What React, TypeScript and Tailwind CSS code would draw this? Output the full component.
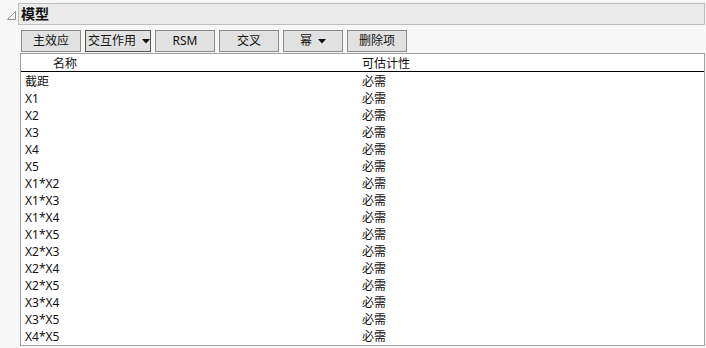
import { useState } from "react";

const terms = [
    "截距", "X1", "X2", "X3", "X4", "X5",
    "X1*X2", "X1*X3", "X1*X4", "X1*X5",
    "X2*X3", "X2*X4", "X2*X5", "X3*X4", "X3*X5", "X4*X5",
];

const font = { fontFamily: '"Segoe UI", "Noto Sans", "Noto Sans CJK SC", sans-serif' };

function Caret() {
    return (
        <svg width="8" height="5" viewBox="0 0 8 5" className="ml-1.5">
            <path d="M0 0 L8 0 L4 4.5 Z" fill="#111" />
        </svg>
    );
}

function ToolButton({ label, width, menu, active }: any) {
    return (
        <button
            className={`h-[22px] ${width} flex items-center ${menu && active ? "justify-start pl-[2px]" : "justify-center"} border ${active ? "border-[#555]" : "border-[#8a8a8a]"} bg-[#e1e1e1] text-[12px] text-[#111] leading-none`}
        >
            {label}
            {menu && <Caret />}
        </button>
    );
}

export default function App() {
    const [open] = useState(true);

    return (
        <div className="w-[706px] h-[348px] bg-[#f7f7f7] text-[#111] overflow-hidden" style={font}>
            <div className="flex items-center pt-[3px]">
                <svg width="11" height="11" viewBox="0 0 11 11" className="ml-[6px] mr-[1px] mt-[3px]">
                    <path d="M9.5 1.5 L9.5 9.5 L1.5 9.5 Z" fill="none" stroke="#8c8c8c" strokeWidth="1" />
                </svg>
                <div className="flex-1 h-[22px] bg-[#ebebeb] border border-[#bdbdbd] flex items-center pl-[2px] mr-[1px]">
                    <span className="text-[14px] font-bold leading-none">模型</span>
                </div>
            </div>

            {open && (
                <div className="pl-[20px]">
                    <div className="flex gap-[4px] mt-[5px] ml-[1px]">
                        <ToolButton label="主效应" width="w-[60px]" />
                        <ToolButton label="交互作用" width="w-[66px]" menu active />
                        <ToolButton label="RSM" width="w-[60px]" />
                        <ToolButton label="交叉" width="w-[60px]" />
                        <ToolButton label="幂" width="w-[60px]" menu />
                        <ToolButton label="删除项" width="w-[60px]" />
                    </div>

                    <div className="mt-[1px] mr-[1px] h-[293px] bg-white border border-[#a0a0a0] text-[12px]">
                        <div className="flex h-[18px] items-center pt-[3px] border-b border-black leading-none">
                            <div className="w-[341px] pl-[32px]">名称</div>
                            <div>可估计性</div>
                        </div>
                        <div className="pt-[1px]">
                            {terms.map(t => (
                                <div key={t} className="flex h-[17px] items-center leading-none">
                                    <div className="w-[341px] pl-[4px]">{t}</div>
                                    <div>必需</div>
                                </div>
                            ))}
                        </div>
                    </div>
                </div>
            )}
        </div>
    );
}
